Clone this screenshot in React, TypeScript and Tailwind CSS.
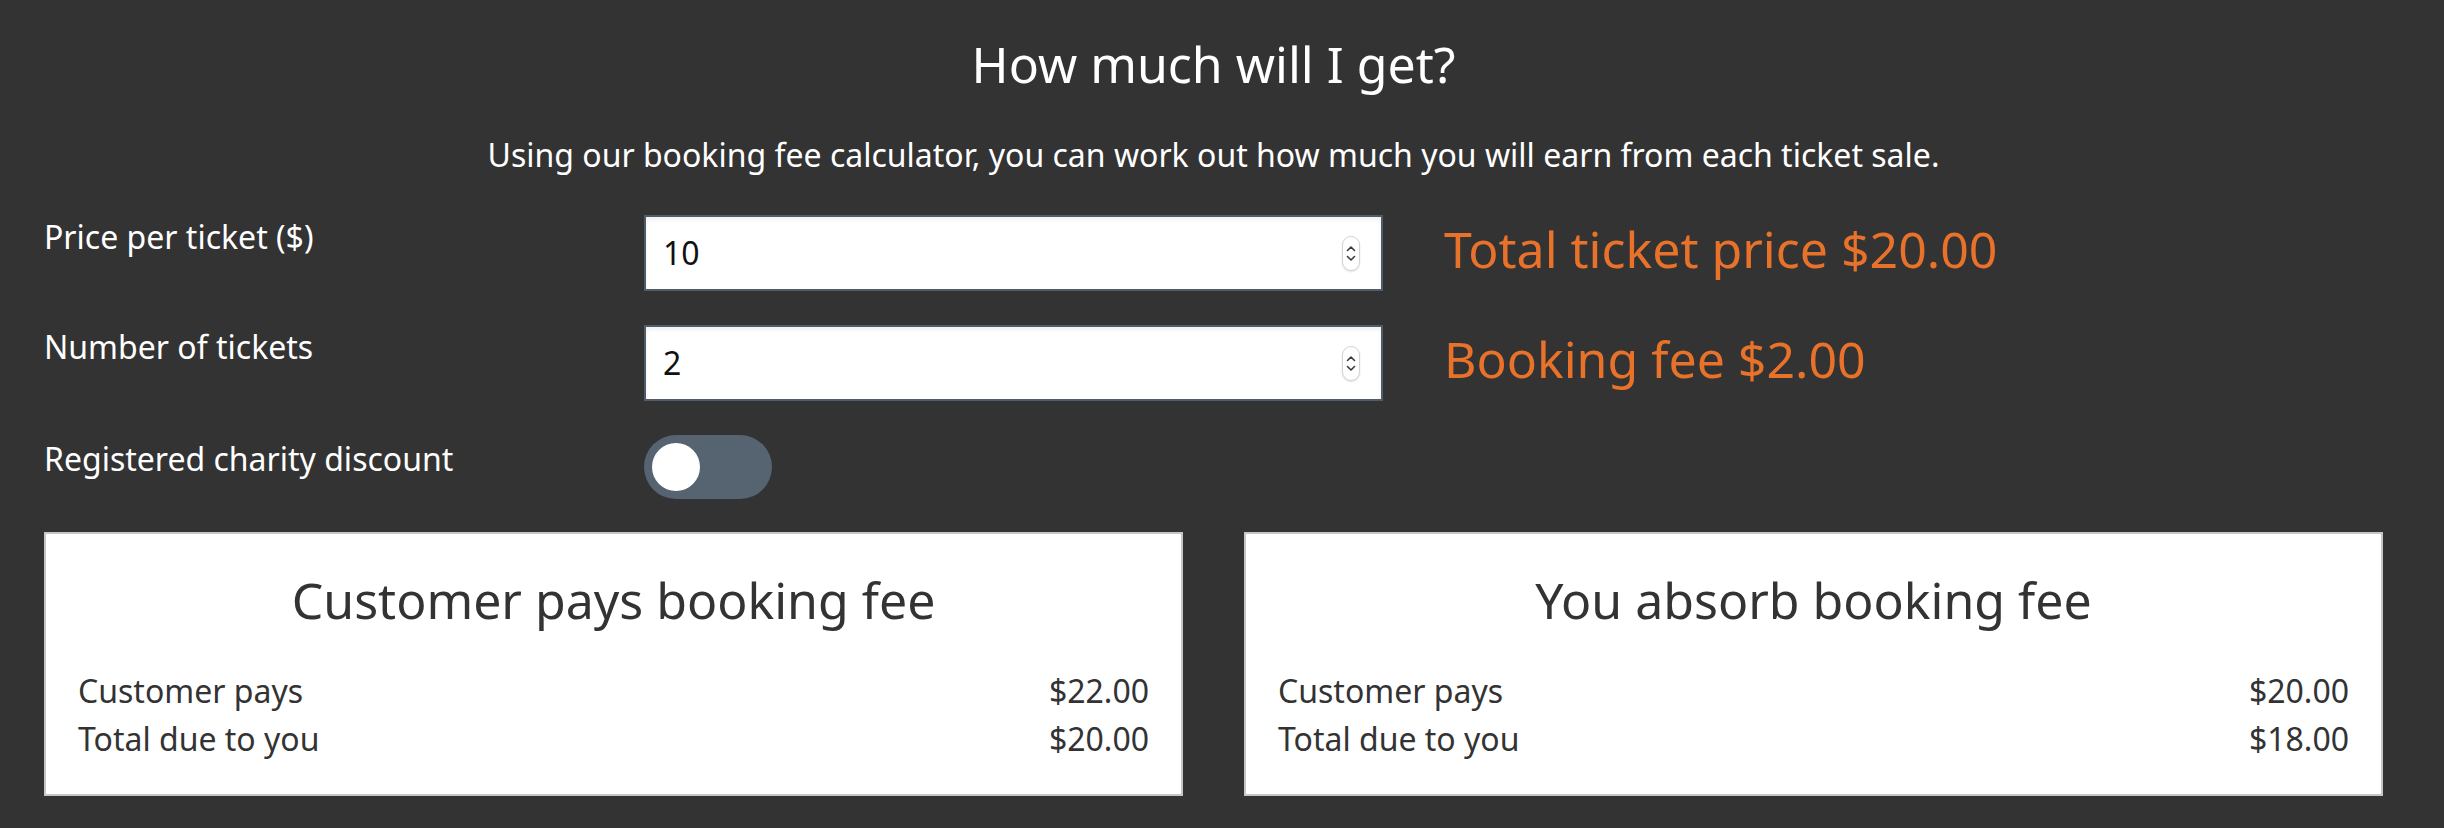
import { useState } from "react";

function Spinner() {
  return (
    <div className="flex h-[35px] w-[18px] flex-col items-center justify-center gap-[3px] rounded-full border border-[#d4d4d4] bg-white shadow-[0_1px_2px_rgba(0,0,0,0.12)]">
      <svg width="10" height="7" viewBox="0 0 10 7" fill="none">
        <path d="M1.5 5.5L5 2L8.5 5.5" stroke="#3a3a3a" strokeWidth="1.6" strokeLinecap="round" strokeLinejoin="round" />
      </svg>
      <svg width="10" height="7" viewBox="0 0 10 7" fill="none">
        <path d="M1.5 1.5L5 5L8.5 1.5" stroke="#3a3a3a" strokeWidth="1.6" strokeLinecap="round" strokeLinejoin="round" />
      </svg>
    </div>
  );
}

function NumberField({ value }: { value: string }) {
  return (
    <div className="flex h-[76px] w-[739px] items-center border-2 border-[#4f5d6b] bg-white pl-[17px] pr-[21px] shadow-[inset_0_3px_4px_rgba(0,0,0,0.06)]">
      <input
        readOnly
        value={value}
        className="min-w-0 flex-1 bg-transparent text-[32px] leading-[44px] text-[#111] outline-none"
      />
      <Spinner />
    </div>
  );
}

function ResultCard({ title, pays, due }: { title: string; pays: string; due: string }) {
  return (
    <div className="border-2 border-[#c6c6c6] bg-white px-[32px] pb-[31px] pt-[32px] text-[#333]">
      <h2 className="text-center text-[50px] leading-[68px]">{title}</h2>
      <div className="mt-[33px] text-[32px] leading-[48px]">
        <div className="flex justify-between">
          <span>Customer pays</span>
          <span>{pays}</span>
        </div>
        <div className="flex justify-between">
          <span>Total due to you</span>
          <span>{due}</span>
        </div>
      </div>
    </div>
  );
}

export default function App() {
  const [charity, setCharity] = useState(false);

  return (
    <div className="min-h-screen bg-[#333333] pb-[33px] pl-[44px] pr-[61px] pt-[30px] text-white [font-family:'Noto_Sans',sans-serif]">
      <h1 className="text-center text-[50px] leading-[68px]">How much will I get?</h1>
      <p className="mt-[35px] text-center text-[32px] leading-[44px]">
        Using our booking fee calculator, you can work out how much you will earn from each ticket sale.
      </p>

      <div className="mt-[38px] flex flex-col gap-[34px]">
        <div className="flex items-start">
          <label className="w-[600px] text-[32px] leading-[44px]">Price per ticket ($)</label>
          <NumberField value="10" />
          <div className="ml-[61px] text-[50px] leading-[68px] text-[#e9722b]">Total ticket price $20.00</div>
        </div>
        <div className="flex items-start">
          <label className="w-[600px] text-[32px] leading-[44px]">Number of tickets</label>
          <NumberField value="2" />
          <div className="ml-[61px] text-[50px] leading-[68px] text-[#e9722b]">Booking fee $2.00</div>
        </div>
        <div className="flex items-start">
          <label className="w-[600px] pt-[2px] text-[32px] leading-[44px]">Registered charity discount</label>
          <button
            onClick={() => setCharity(!charity)}
            className={`flex h-[64px] w-[128px] items-center rounded-full px-[8px] ${charity ? "justify-end bg-[#e9722b]" : "justify-start bg-[#566472]"}`}
          >
            <span className="h-[48px] w-[48px] rounded-full bg-white" />
          </button>
        </div>
      </div>

      <div className="mt-[33px] grid grid-cols-2 gap-[61px]">
        <ResultCard title="Customer pays booking fee" pays="$22.00" due="$20.00" />
        <ResultCard title="You absorb booking fee" pays="$20.00" due="$18.00" />
      </div>
    </div>
  );
}
